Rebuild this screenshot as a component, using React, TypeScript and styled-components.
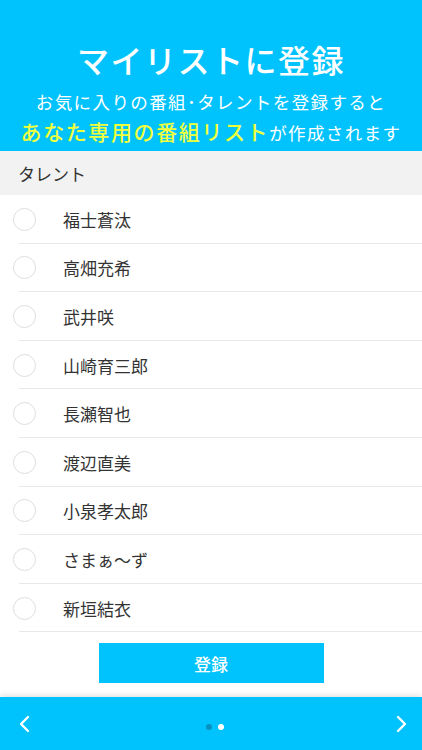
import styled, { createGlobalStyle } from 'styled-components'

const GlobalStyle = createGlobalStyle`
  html, body {
    margin: 0;
    padding: 0;
    background: #fff;
    font-family: "Noto Sans CJK JP", "Noto Sans", sans-serif;
  }
`

const Page = styled.div`
  width: 422px;
  height: 750px;
  display: flex;
  flex-direction: column;
  overflow: hidden;
`

const Header = styled.header`
  background-color: #00c3fe;
  height: 151px;
  display: flex;
  flex-direction: column;
  align-items: center;
  color: #fff;
`

const Title = styled.h1`
  margin: 36px 0 0;
  font-size: 32px;
  font-weight: 500;
  line-height: 46px;
  letter-spacing: 1.5px;
`

const Lead = styled.p`
  margin: 8px 0 0;
  font-size: 17.5px;
  line-height: 24px;
  letter-spacing: 1.4px;
`

const LeadSecond = styled.p`
  margin: 0;
  font-size: 17.5px;
  line-height: 34px;
  letter-spacing: 1.4px;
  white-space: nowrap;
`

const Highlight = styled.span`
  color: #f0ff3c;
  font-size: 21px;
  font-weight: 500;
  letter-spacing: 1.6px;
`

const SectionHead = styled.div`
  background-color: #f2f2f2;
  height: 44px;
  display: flex;
  align-items: center;
  padding-left: 18px;
  font-size: 17px;
  color: #333;
`

const List = styled.ul`
  margin: 0;
  padding: 0;
  list-style: none;
`

const Row = styled.li`
  height: 48.6px;
  display: flex;
  align-items: center;
  position: relative;
  &::after {
    content: '';
    position: absolute;
    left: 19px;
    right: 0;
    bottom: 0;
    height: 1px;
    background: #e8e8e8;
  }
`

const Radio = styled.span`
  width: 23px;
  height: 23px;
  border-radius: 50%;
  border: 1px solid #dedede;
  margin-left: 13px;
  box-sizing: border-box;
  flex-shrink: 0;
`

const Name = styled.span`
  margin-left: 27px;
  font-size: 17px;
  color: #333;
`

const ButtonWrap = styled.div`
  display: flex;
  justify-content: center;
  padding-top: 11px;
`

const SubmitButton = styled.button`
  width: 225px;
  height: 40px;
  border: none;
  background-color: #00c3fe;
  color: #fff;
  font-family: inherit;
  font-size: 17px;
  font-weight: 500;
  padding: 0;
`

const Footer = styled.footer`
  margin-top: auto;
  height: 53px;
  background-color: #00c3fe;
  box-shadow: 0 -2px 6px rgba(0, 0, 0, 0.12);
  display: flex;
  align-items: center;
  justify-content: space-between;
  padding: 0 14px 0 18px;
`

const Dots = styled.div`
  display: flex;
  gap: 6px;
  padding-top: 6px;
  padding-left: 4px;
`

const Dot = styled.span<{ active?: boolean }>`
  width: 6px;
  height: 6px;
  border-radius: 50%;
  background: ${props => props.active ? '#fff' : '#0891c0'};
`

const Chevron = ({ dir }: { dir: 'left' | 'right' }) => (
  <svg width="14" height="20" viewBox="0 0 14 20">
    <path
      d={dir === 'left' ? 'M10 3 L3 10 L10 17' : 'M4 3 L11 10 L4 17'}
      fill="none"
      stroke="#fff"
      strokeWidth="2.4"
      strokeLinecap="round"
      strokeLinejoin="round"
    />
  </svg>
)

const talents = [
  '福士蒼汰',
  '高畑充希',
  '武井咲',
  '山崎育三郎',
  '長瀬智也',
  '渡辺直美',
  '小泉孝太郎',
  'さまぁ〜ず',
  '新垣結衣',
]

export default function App() {
  return (
    <Page>
      <GlobalStyle />
      <Header>
        <Title>マイリストに登録</Title>
        <Lead>お気に入りの番組･タレントを登録すると</Lead>
        <LeadSecond>
          <Highlight>あなた専用の番組リスト</Highlight>が作成されます
        </LeadSecond>
      </Header>
      <SectionHead>タレント</SectionHead>
      <List>
        {talents.map(name => (
          <Row key={name}>
            <Radio />
            <Name>{name}</Name>
          </Row>
        ))}
      </List>
      <ButtonWrap>
        <SubmitButton>登録</SubmitButton>
      </ButtonWrap>
      <Footer>
        <Chevron dir="left" />
        <Dots>
          <Dot />
          <Dot active />
        </Dots>
        <Chevron dir="right" />
      </Footer>
    </Page>
  )
}
